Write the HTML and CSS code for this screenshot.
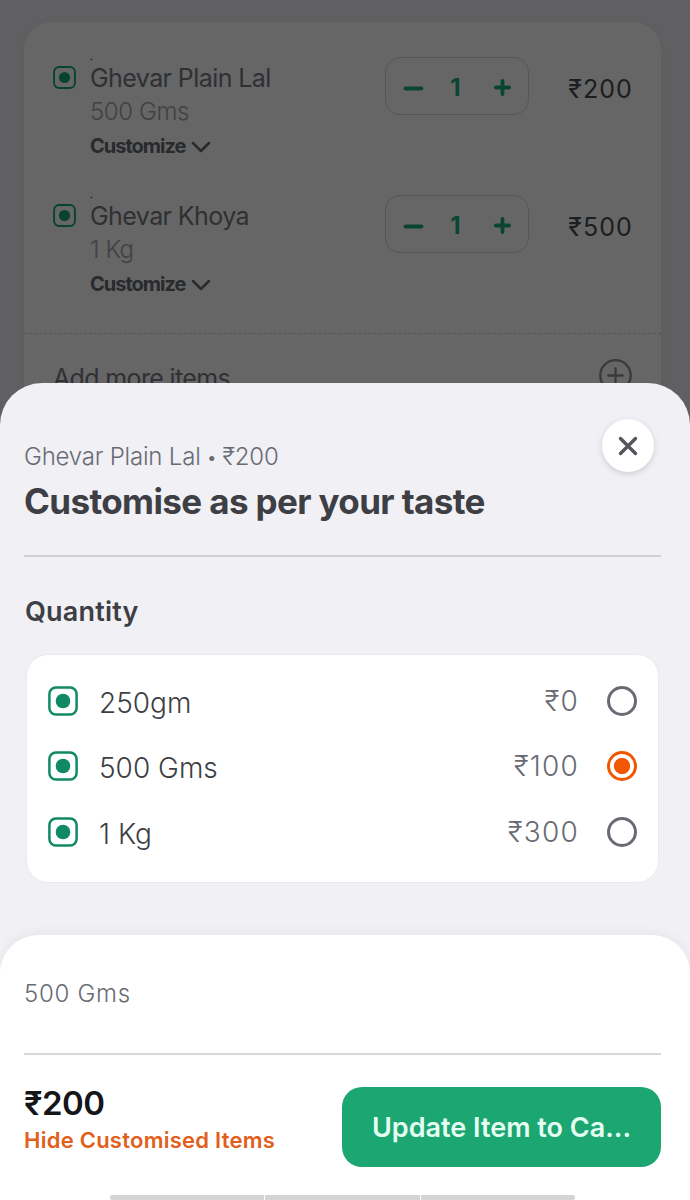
FILE: index.html
```html
<!DOCTYPE html>
<html lang="en">
	<head>
		<meta charset="utf-8">
		<title>Customise item</title>
		<meta name="viewport" content="width=device-width, initial-scale=1">
		<link rel="stylesheet" href="styles.css">
	</head>
	<body>
		<svg class="defs" width="0" height="0">
			<symbol id="veg" viewBox="0 0 30 30">
				<rect x="1.4" y="1.4" width="27.2" height="27.2" rx="6.5" fill="none" stroke="currentColor" stroke-width="2.5"/>
				<circle cx="15" cy="15" r="7.3" fill="currentColor"/>
			</symbol>
			<symbol id="chevron" viewBox="0 0 20 12">
				<path d="M2 2l8 8 8-8" fill="none" stroke="currentColor" stroke-width="2.5" stroke-linecap="round" stroke-linejoin="round"/>
			</symbol>
			<symbol id="minus" viewBox="0 0 20 20">
				<path d="M2.5 10h15" stroke="currentColor" stroke-width="3.8" stroke-linecap="round"/>
			</symbol>
			<symbol id="plus" viewBox="0 0 20 20">
				<path d="M3.7 10h12.6M10 3.7v12.6" stroke="currentColor" stroke-width="3.6" stroke-linecap="round"/>
			</symbol>
		</svg>
		<div class="screen">
			<div class="cart">
				<div class="cart-item">
					<svg class="cart-veg"><use href="#veg"/></svg>
					<div class="info">
						<div class="dot">.</div>
						<div class="name">Ghevar Plain Lal</div>
						<div class="variant">500 Gms</div>
						<div class="customize"><span>Customize</span> <svg><use href="#chevron"/></svg></div>
					</div>
					<div class="stepper">
						<svg><use href="#minus"/></svg>
						<span>1</span>
						<svg><use href="#plus"/></svg>
					</div>
					<div class="item-price">₹200</div>
				</div>
				<div class="cart-item">
					<svg class="cart-veg"><use href="#veg"/></svg>
					<div class="info">
						<div class="dot">.</div>
						<div class="name">Ghevar Khoya</div>
						<div class="variant">1 Kg</div>
						<div class="customize"><span>Customize</span> <svg><use href="#chevron"/></svg></div>
					</div>
					<div class="stepper">
						<svg><use href="#minus"/></svg>
						<span>1</span>
						<svg><use href="#plus"/></svg>
					</div>
					<div class="item-price">₹500</div>
				</div>
				<div class="add-more">
					<span>Add more items</span>
					<svg viewBox="0 0 32 32"><circle cx="16" cy="16" r="14.8"/><path d="M9 16h14M16 9v14"/></svg>
				</div>
			</div>
			<div class="overlay"></div>
			<div class="sheet">
				<div class="sheet-head">
					<div>
						<div class="sheet-item">Ghevar Plain Lal <span class="bullet">•</span> ₹200</div>
						<h1>Customise as per your taste</h1>
					</div>
					<button class="close"><svg viewBox="0 0 20 20"><path d="M2.5 2.5l15 15M17.5 2.5l-15 15"/></svg></button>
				</div>
				<h2>Quantity</h2>
				<div class="options">
					<div class="option">
						<svg class="veg"><use href="#veg"/></svg>
						<span class="label">250gm</span>
						<span class="price">₹0</span>
						<i class="radio"></i>
					</div>
					<div class="option">
						<svg class="veg"><use href="#veg"/></svg>
						<span class="label">500 Gms</span>
						<span class="price">₹100</span>
						<i class="radio checked"></i>
					</div>
					<div class="option">
						<svg class="veg"><use href="#veg"/></svg>
						<span class="label">1 Kg</span>
						<span class="price">₹300</span>
						<i class="radio"></i>
					</div>
				</div>
				<div class="footer">
					<div class="chosen">500 Gms</div>
					<div class="checkout">
						<div>
							<div class="total">₹200</div>
							<a class="hide">Hide Customised Items</a>
						</div>
						<button class="update">Update Item to Ca...</button>
					</div>
					<div class="navbar"><i></i><i></i><i></i></div>
				</div>
			</div>
		</div>
	</body>
</html>
```

FILE: styles.css
```css
* {
	box-sizing: border-box;
}
body {
	margin: 0px;
	font-family: Inter, "Noto Sans", sans-serif;
}
button {
	border: none;
	padding: 0px;
	font-family: inherit;
}
.defs {
	position: absolute;
}
.screen {
	position: relative;
	width: 690px;
	height: 1200px;
	overflow: hidden;
	background-color: #f0f0f5;
	padding: 22px 29px 0px 24px;
}

/* cart behind the sheet */
.cart {
	height: 460px;
	border-radius: 28px;
	background-color: white;
	padding-top: 29px;
	box-shadow: 0px 0px 16px rgba(0, 0, 0, 0.04);
}
.cart-item {
	display: flex;
	align-items: flex-start;
	height: 111px;
	margin: 0px 29px 27px;
}
.cart-veg {
	width: 23px;
	height: 23px;
	margin: 15px 14px 0px 0px;
	color: #14a877;
}
.info {
	flex: 1;
}
.dot {
	font-size: 9px;
	line-height: 12px;
}
.name {
	font-size: 25px;
	line-height: 30px;
	letter-spacing: -0.58px;
	color: #77797f;
}
.variant {
	font-size: 24px;
	line-height: 37px;
	letter-spacing: -0.4px;
	font-weight: 300;
	color: #a2a4a9;
}
.customize {
	display: flex;
	align-items: center;
	gap: 6px;
	font-size: 20px;
	line-height: 32px;
	letter-spacing: -1px;
	font-weight: 700;
	color: #686a72;
}
.customize svg {
	width: 20px;
	height: 12px;
	margin-top: 2px;
}
.stepper {
	display: flex;
	align-items: center;
	justify-content: space-between;
	width: 144px;
	height: 58px;
	margin-top: 6px;
	padding: 0px 15px 0px 17px;
	border: 1px solid #d8d8dc;
	border-radius: 15px;
	color: #1bac7b;
	font-size: 24px;
	font-weight: 700;
}
.stepper svg {
	width: 21px;
	height: 21px;
	margin-top: 2px;
}
.stepper svg:first-child {
	margin-top: 5px;
}
.stepper span {
	margin: 3px 5px 0px 0px;
}
.item-price {
	width: 104px;
	margin: 20px -1px 0px 0px;
	text-align: right;
	font-size: 25px;
	line-height: 36px;
	letter-spacing: 1.1px;
	color: #4a4b52;
}
.add-more {
	display: flex;
	align-items: flex-start;
	justify-content: space-between;
	margin-top: 33px;
	border-top: 1px dashed #d4d4d8;
	padding: 25px 29px 0px;
	font-size: 25px;
	line-height: 38px;
	letter-spacing: -0.65px;
	color: #77797f;
}
.add-more svg {
	width: 33px;
	height: 33px;
	fill: none;
	stroke: #8d8e94;
	stroke-width: 2.2;
	stroke-linecap: round;
}
.overlay {
	position: absolute;
	inset: 0px;
	background-color: rgba(0, 0, 0, 0.6);
}

/* bottom sheet */
.sheet {
	position: absolute;
	left: 0px;
	right: 0px;
	top: 383px;
	bottom: 0px;
	display: flex;
	flex-direction: column;
	border-radius: 42px 42px 0px 0px;
	background-color: #f0f0f5;
}
.sheet-head {
	display: flex;
	justify-content: space-between;
	height: 174px;
	margin: 0px 29px 0px 24px;
	padding: 36px 7px 0px 0px;
	border-bottom: 2px solid #d0d0d4;
}
.sheet-item {
	height: 36px;
	margin-top: 20px;
	font-size: 24px;
	line-height: 36px;
	letter-spacing: -0.2px;
	font-weight: 300;
	color: #686b73;
}
.bullet {
	font-size: 16px;
	line-height: 1;
	font-weight: 400;
	vertical-align: 2px;
}
h1 {
	margin: 3px 0px 0px;
	font-size: 35px;
	line-height: 46px;
	letter-spacing: -0.62px;
	font-weight: 700;
	color: #3d3f45;
}
.close {
	width: 52px;
	height: 53px;
	border-radius: 50%;
	background-color: white;
	box-shadow: 0px 2px 6px rgba(0, 0, 0, 0.15);
}
.close svg {
	display: block;
	width: 20px;
	height: 20px;
	margin: auto;
	stroke: #55565b;
	stroke-width: 3.4;
	stroke-linecap: round;
}
h2 {
	margin: 36px 25px 0px;
	font-size: 27px;
	line-height: 38px;
	letter-spacing: 0.2px;
	font-weight: 600;
	color: #3d3f45;
}
.options {
	height: 229px;
	margin: 23px 31px 0px 26px;
	padding: 13px 21px;
	border: 1px solid #eaeaee;
	border-radius: 22px;
	background-color: white;
}
.option {
	display: flex;
	align-items: center;
	height: 65.5px;
}
.veg {
	width: 30px;
	height: 30px;
	margin-right: 21px;
	color: #0f8a65;
}
.label {
	flex: 1;
	font-size: 28px;
	line-height: 34px;
	padding-top: 4px;
	font-weight: 300;
	color: #3d3f45;
}
.price {
	font-size: 28px;
	line-height: 34px;
	letter-spacing: 1.2px;
	font-weight: 300;
	color: #686b73;
}
.radio {
	width: 30px;
	height: 30px;
	margin-left: 28px;
	border: 3px solid #686b73;
	border-radius: 50%;
}
.radio.checked {
	border-color: #f15700;
	background: radial-gradient(circle, #f15700 7.7px, white 8.5px);
}

/* footer */
.footer {
	flex: 1;
	margin-top: 52px;
	padding: 0px 29px 0px 24px;
	border-radius: 38px 38px 0px 0px;
	background-color: white;
	box-shadow: 0px -2px 12px rgba(0, 0, 0, 0.05);
}
.chosen {
	height: 120px;
	padding-top: 41px;
	border-bottom: 2px solid #d8d8d9;
	font-size: 24px;
	line-height: 36px;
	letter-spacing: 0.7px;
	font-weight: 300;
	color: #686b73;
}
.checkout {
	display: flex;
	justify-content: space-between;
	height: 140px;
	padding-top: 32px;
}
.total {
	font-size: 33px;
	line-height: 33px;
	letter-spacing: -0.5px;
	font-weight: 600;
	color: #15161a;
}
.hide {
	display: block;
	font-size: 22px;
	line-height: 40px;
	letter-spacing: 0.25px;
	font-weight: 600;
	color: #e0601c;
}
.update {
	width: 319px;
	height: 80px;
	border-radius: 20px;
	background-color: #1ca672;
	color: #e4fff2;
	font-size: 27px;
	font-weight: 600;
}
.navbar {
	display: flex;
	gap: 1px;
	width: 465px;
	height: 5px;
	margin-left: 86px;
}
.navbar i {
	flex: 1;
	background-color: #d4d4d4;
}
.navbar i:first-child {
	border-radius: 3px 0px 0px 3px;
}
.navbar i:last-child {
	border-radius: 0px 3px 3px 0px;
}
```
